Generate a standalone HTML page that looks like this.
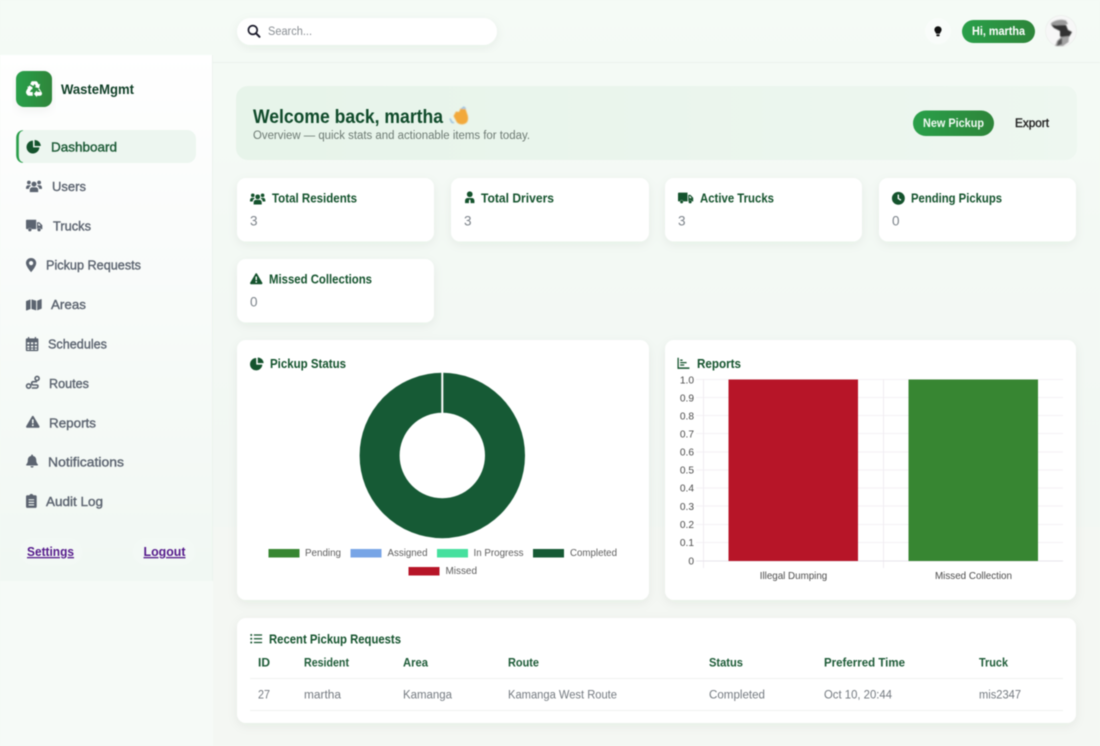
<!DOCTYPE html>
<html lang="en"><head><meta charset="utf-8"><title>WasteMgmt Dashboard</title>
<style>
html,body{margin:0;padding:0;width:1100px;height:746px;overflow:hidden;background:#f4f8f4}
svg{display:block;filter:blur(.4px)}
text{font-family:"Liberation Sans",sans-serif}
.m{stroke-width:.38px;stroke:currentColor}
.nav{font-size:13px;fill:#5c6470;color:#5c6470}
.card{font-size:12.5px;font-weight:bold;fill:#14532d}
.val{font-size:13.5px;fill:#7c838a}
.th{font-size:11.5px;font-weight:bold;fill:#1c5a36}
.td{font-size:11.5px;fill:#747a80}
.leg{font-size:10.2px;fill:#5e5e5e}
.tick{font-size:10.2px;fill:#4c4c4c}
</style></head><body>
<svg width="1100" height="746" viewBox="0 0 1100 746" xmlns="http://www.w3.org/2000/svg">
<defs>
<linearGradient id="bg" x1="0" y1="0" x2="0" y2="1"><stop offset="0" stop-color="#f5fbf6"/><stop offset=".7" stop-color="#f2f7f3"/><stop offset="1" stop-color="#f3f6f2"/></linearGradient>
<linearGradient id="side" x1="0" y1="0" x2="0" y2="1"><stop offset="0" stop-color="#ffffff"/><stop offset=".35" stop-color="#fafcfb"/><stop offset="1" stop-color="#f1f8f3"/></linearGradient>
<linearGradient id="btn" x1="0" y1="0" x2="1" y2="0"><stop offset="0" stop-color="#2aa04a"/><stop offset="1" stop-color="#2e853a"/></linearGradient>
<linearGradient id="ban" x1="0" y1="0" x2="1" y2="0"><stop offset="0" stop-color="#e7f4ea"/><stop offset="1" stop-color="#eef7f0"/></linearGradient>
<filter id="sh" x="-10%" y="-20%" width="120%" height="150%"><feDropShadow dx="0" dy="3" stdDeviation="5" flood-color="#203a28" flood-opacity=".06"/></filter>
<filter id="b1" x="-20%" y="-20%" width="140%" height="140%"><feGaussianBlur stdDeviation=".6"/></filter>

<g id="pie"><path d="M7 1.2A7 7 0 1 0 14 8.600H7.200Z"/><path d="M8.800.5A6.800 6.800 0 0 1 15.500 7H8.800Z"/></g>
<g id="users"><circle cx="8" cy="5.600" r="2.500"/><circle cx="2.900" cy="4" r="1.900"/><circle cx="13.100" cy="4" r="1.900"/><path d="M3.800 13.600V11.300C3.800 9.400 5.300 8.700 6.500 8.700H9.500C10.700 8.700 12.200 9.400 12.200 11.300V13.600Z"/><path d="M0 9.600C0 7.600 1 6.700 2.300 6.700H3.800C4.300 6.700 4.700 7 5 7.200 3.700 7.900 2.800 9 2.800 10.400H0ZM16 9.600C16 7.600 15 6.700 13.700 6.700H12.200C11.700 6.700 11.300 7 11 7.200 12.300 7.900 13.200 9 13.200 10.400H16Z"/></g>
<g id="truck"><path d="M.8 2.200H10V11.400H5.700A2.100 2.100 0 0 0 1.900 11.400H.8A.8.8 0 0 1 0 10.600V3A.8.8 0 0 1 .8 2.200Z"/><path d="M10.800 4.600H13.100L16 7.600V11.400H14.800A2.100 2.100 0 0 0 10.900 11.400H10.800ZM12 5.800V8H14.400L12.600 5.800Z" fill-rule="evenodd"/><circle cx="3.800" cy="12" r="1.600"/><circle cx="12.800" cy="12" r="1.600"/></g>
<g id="pin"><path fill-rule="evenodd" d="M8 .5C4.800.5 2.600 2.900 2.600 5.800 2.600 9 6.400 13.600 8 15.500 9.600 13.600 13.400 9 13.400 5.800 13.400 2.900 11.200.5 8 .5ZM8 3.700A2.200 2.200 0 1 1 8 8.100 2.200 2.200 0 0 1 8 3.700Z"/></g>
<g id="map"><path d="M0 4.200 4.600 2.400V12.200L.6 13.800C.3 13.900 0 13.700 0 13.400ZM5.600 2.400 10.400 3.800V13.600L5.600 12.200ZM11.400 3.800 15.400 2.200C15.700 2.100 16 2.300 16 2.600V11.800L11.400 13.600Z"/></g>
<g id="cal"><path fill-rule="evenodd" d="M3.600.5H5V2H10.800V.5H12.200V2H13.600A1 1 0 0 1 14.600 3V14.400A1 1 0 0 1 13.600 15.400H2.400A1 1 0 0 1 1.400 14.400V3A1 1 0 0 1 2.400 2H3.600ZM2.900 6.200V8.200H5.200V6.200ZM6.800 6.200V8.200H9.200V6.200ZM10.800 6.200V8.200H13.100V6.200ZM2.900 9.800V11.600H5.200V9.800ZM6.800 9.800V11.600H9.200V9.800ZM10.800 9.800V11.600H13.100V9.800ZM2.900 12.600V13.900H5.200V12.600ZM6.800 12.600V13.900H9.200V12.600ZM10.800 12.600V13.900H13.100V12.600Z"/></g>
<g id="route"><circle cx="3" cy="12" r="2.400" fill="none" stroke="currentColor" stroke-width="1.800"/><circle cx="12.600" cy="3.400" r="2.300" fill="none" stroke="currentColor" stroke-width="1.800"/><path d="M12.600 7H8.500C7 7 6.400 8 6.400 8.900S7 10.800 8.500 10.800H12C13.200 10.800 13.600 11.500 13.600 12.200S13 14.200 12 14.200H6.600" fill="none" stroke="currentColor" stroke-width="1.800"/></g>
<g id="warn"><path fill-rule="evenodd" d="M8 1C8.500 1 8.900 1.300 9.100 1.700L15.800 13.200C16.200 14 15.700 15 14.800 15H1.200C.3 15-.2 14 .2 13.200L6.900 1.700C7.100 1.300 7.500 1 8 1ZM7.100 5.200V9.800H8.900V5.200ZM8 10.900A1.100 1.100 0 1 0 8 13.100 1.100 1.100 0 0 0 8 10.900Z"/></g>
<g id="bell"><path d="M8 .5C8.600.5 9 1 9 1.600V2.100C11.200 2.500 12.800 4.400 12.800 6.700V7.700C12.800 9 13.300 10.300 14.100 11.300L14.600 11.800C15 12.300 14.700 13 14 13H2C1.300 13 1 12.300 1.400 11.800L1.900 11.300C2.700 10.300 3.200 9 3.200 7.700V6.700C3.200 4.400 4.800 2.500 7 2.100V1.600C7 1 7.400.5 8 .5Z"/><path d="M6.200 13.800H9.800C9.800 14.800 9 15.500 8 15.500S6.200 14.800 6.200 13.800Z"/></g>
<g id="clip"><path fill-rule="evenodd" d="M8 .4C9 .4 9.800 1 10.100 1.900H12.400C13.200 1.900 13.800 2.500 13.800 3.300V14.200C13.800 15 13.200 15.600 12.400 15.600H3.600C2.800 15.600 2.200 15 2.200 14.200V3.300C2.200 2.500 2.800 1.900 3.600 1.900H5.900C6.200 1 7 .4 8 .4ZM5 6.200V7.400H11V6.200ZM5 9V10.200H11V9ZM5 11.800V13H11V11.800Z"/></g>
<g id="recycle" fill="#fff">
<path d="M6.200 1.200H9.600C10.200 1.200 10.700 1.500 11 2L12.300 4.200 13.500 3.500 12.600 7.800 8.500 6.500 9.700 5.800 8.400 3.600 7.300 5.600 4.300 3.900 5 2.500C5.300 1.700 5.700 1.200 6.200 1.200Z"/>
<path d="M3.600 5 6.800 6.900 6.100 8.100 7 8.200 3 9.700 1.700 5.800 2.800 6.400 3.400 5.300ZM.9 9.700 2.400 7.100 5.300 8.900 4 11.100 6.700 11.100V14.600H3.300C2.200 14.600 1.500 13.900 1 13 .3 11.800.3 10.700.9 9.700Z"/>
<path d="M12.800 7.900 15.100 11.700C15.700 12.800 15 14.600 13.400 14.600H10.600V16L7.700 12.800 10.600 9.600V11H13.900L11.700 8.600Z"/>
</g>
<g id="tie"><circle cx="8" cy="4.200" r="3.700"/><path d="M2 15.500V12.600C2 10.400 3.600 9 5.400 9H10.600C12.400 9 14 10.400 14 12.600V15.500H9.100L9 12.200 8 10.600 7 12.200 6.900 15.500Z"/></g>
<g id="clock"><path fill-rule="evenodd" d="M8 1A7 7 0 1 1 8 15 7 7 0 0 1 8 1ZM7.200 4V8.400L10.400 10.600 11.200 9.400 8.700 7.700V4Z"/></g>
<g id="chart"><path d="M.6 1H2.200V13H15.500V14.800H.6Z"/><path d="M4 9.200H9V10.800H4ZM4 6.200H12V7.800H4ZM4 3.200H7V4.800H4Z"/></g>
<g id="list"><circle cx="1.600" cy="3.200" r="1.300"/><circle cx="1.600" cy="8" r="1.300"/><circle cx="1.600" cy="12.800" r="1.300"/><path d="M5 2.400H15.500V4H5ZM5 7.200H15.500V8.800H5ZM5 12H15.500V13.600H5Z"/></g>
</defs>

<!-- page -->
<rect width="1100" height="746" fill="url(#bg)"/>
<rect x="213" y="527" width="887" height="219" fill="#f4f7f3"/>
<rect y="581" width="213" height="165" fill="#f6faf7"/>
<rect x="213" y="62" width="887" height="1" fill="#ebf2ec"/>

<!-- sidebar -->
<rect x="0" y="55" width="212" height="526" fill="url(#side)"/>
<rect x="212" y="55" width="1" height="526" fill="#ecf3ee"/>
<rect x="16" y="71" width="36" height="36" rx="8" fill="url(#btn)" filter="url(#sh)"/>
<use href="#recycle" transform="translate(25.500 80) scale(1.08)"/>
<text x="61" y="94" font-size="13.500" font-weight="bold" fill="#103f27" textLength="73" lengthAdjust="spacingAndGlyphs">WasteMgmt</text>

<rect x="16" y="130" width="180" height="33" rx="9" fill="#edf6f0"/>
<path d="M23 130.500C19 130.500 16.500 134 16.500 138V155C16.500 159 19 162.500 23 162.500C20 162 18.500 159 18.500 155V138C18.500 134 20 131 23 130.500Z" fill="#2a9d4a" stroke="#2a9d4a" stroke-width=".6"/>
<use href="#pie" transform="translate(26.500 139.500) scale(.92)" fill="#14532d"/>
<text class="m" x="51" y="151.500" font-size="13" fill="#1c5a36" color="#1c5a36" textLength="66" lengthAdjust="spacingAndGlyphs">Dashboard</text>

<g fill="#5c6470" color="#5c6470">
<use href="#users" transform="translate(26 178.500) scale(1)"/>
<use href="#truck" transform="translate(26 217.500) scale(1.02)"/>
<use href="#pin" transform="translate(23.500 257.500) scale(.95)"/>
<use href="#map" transform="translate(26 297) scale(.98)"/>
<use href="#cal" transform="translate(24.500 336.500) scale(.95)"/>
<use href="#route" transform="translate(26 375.500) scale(.88)"/>
<use href="#warn" transform="translate(26 415) scale(.85)"/>
<use href="#bell" transform="translate(25 454) scale(.88)"/>
<use href="#clip" transform="translate(24 493.500) scale(.92)"/>
</g>
<g class="nav">
<text class="m nav" x="52" y="191" textLength="34" lengthAdjust="spacingAndGlyphs">Users</text>
<text class="m nav" x="53" y="230.500" textLength="38" lengthAdjust="spacingAndGlyphs">Trucks</text>
<text class="m nav" x="46" y="269.500" textLength="95" lengthAdjust="spacingAndGlyphs">Pickup Requests</text>
<text class="m nav" x="51" y="309" textLength="35" lengthAdjust="spacingAndGlyphs">Areas</text>
<text class="m nav" x="48" y="348.500" textLength="59" lengthAdjust="spacingAndGlyphs">Schedules</text>
<text class="m nav" x="49" y="388" textLength="40" lengthAdjust="spacingAndGlyphs">Routes</text>
<text class="m nav" x="49" y="427.500" textLength="47" lengthAdjust="spacingAndGlyphs">Reports</text>
<text class="m nav" x="48" y="466.500" textLength="76" lengthAdjust="spacingAndGlyphs">Notifications</text>
<text class="m nav" x="46" y="506" textLength="57" lengthAdjust="spacingAndGlyphs">Audit Log</text>
</g>
<rect x="20" y="538" width="62" height="27" rx="13" fill="#f3f9f5"/>
<rect x="133" y="538" width="62" height="27" rx="13" fill="#f3f9f5"/>
<text x="27" y="556" font-size="13" font-weight="bold" fill="#551a8b" text-decoration="underline" textLength="47" lengthAdjust="spacingAndGlyphs">Settings</text>
<text x="143.500" y="556" font-size="13" font-weight="bold" fill="#551a8b" text-decoration="underline" textLength="42" lengthAdjust="spacingAndGlyphs">Logout</text>

<!-- top bar -->
<rect x="237" y="18" width="260" height="27" rx="13.500" fill="#fff" filter="url(#sh)"/>
<circle cx="252.800" cy="30" r="4.400" fill="none" stroke="#1a1a2a" stroke-width="1.700"/>
<path d="M256 33.300 259.500 36.800" stroke="#1a1a2a" stroke-width="2" stroke-linecap="round"/>
<text x="268" y="35" font-size="11.500" fill="#8a8f94" textLength="44" lengthAdjust="spacingAndGlyphs">Search...</text>

<circle cx="938" cy="31" r="13" fill="#f9fcfa"/>
<path d="M938 26.200A3.600 3.600 0 0 1 941.600 29.800C941.600 31.400 940.200 32.400 939.900 33.800H936.100C935.800 32.400 934.400 31.400 934.400 29.800A3.600 3.600 0 0 1 938 26.200Z" fill="#111"/>
<rect x="936.300" y="34.400" width="3.400" height="1.800" rx=".8" fill="#111"/>

<rect x="962" y="20" width="73" height="23" rx="11.500" fill="url(#btn)"/>
<text x="972" y="35" font-size="11.500" font-weight="bold" fill="#fff" textLength="53" lengthAdjust="spacingAndGlyphs">Hi, martha</text>

<circle cx="1061" cy="31" r="15.500" fill="#f7f7f7" stroke="#eef1ee"/>
<g filter="url(#b1)">
<path d="M1050.500 24C1053 20.500 1060 18.500 1066 20.500L1068 24 1062 25.500 1055 25.500Z" fill="#9a9a9a"/>
<path d="M1051 24.500 1056 25.500 1066 25 1068 30 1072 32 1069 37 1063 39 1060 36 1060 31 1054 28Z" fill="#333"/>
<path d="M1061 37 1069 36 1068.500 42 1063 46 1055 46 1057 41Z" fill="#a2a2a2"/>
<path d="M1058 41 1062 38 1062 44 1057 46Z" fill="#555"/>
</g>

<!-- banner -->
<rect x="236" y="86" width="841" height="74" rx="12" fill="url(#ban)"/>
<text x="253" y="123" font-size="19" font-weight="bold" fill="#0f4a2a" textLength="190" lengthAdjust="spacingAndGlyphs">Welcome back, martha</text>
<g filter="url(#b1)">
<path d="M453.500 116 456 111.500 459 112 460.500 108.500 463 109 465.500 109 467 113.500C468.500 117 468.500 120.500 466.500 122.800 464 125 459.500 124.800 457 122.500Z" fill="#f2a93b"/>
<path d="M450 118.500 451.800 122.300 454 122.800M461.500 109 463.800 107.200 465.600 108.700" stroke="#8fb8dc" stroke-width="1.300" fill="none"/>
</g>
<text x="253" y="139" font-size="11.500" fill="#6d7a73" textLength="277" lengthAdjust="spacingAndGlyphs">Overview — quick stats and actionable items for today.</text>
<rect x="913" y="110.500" width="81" height="25.500" rx="12.750" fill="url(#btn)"/>
<text x="923" y="127" font-size="11.500" font-weight="bold" fill="#f2fbf4" textLength="61" lengthAdjust="spacingAndGlyphs">New Pickup</text>
<text x="1015" y="127" font-size="11.500" fill="#222" class="m" color="#222" textLength="34" lengthAdjust="spacingAndGlyphs">Export</text>

<!-- stat cards -->
<g fill="#fff" filter="url(#sh)">
<rect x="237" y="178" width="197" height="63.500" rx="9"/>
<rect x="451" y="178" width="198" height="63.500" rx="9"/>
<rect x="665" y="178" width="197" height="63.500" rx="9"/>
<rect x="879" y="178" width="197" height="63.500" rx="9"/>
<rect x="237" y="259" width="197" height="63.500" rx="9"/>
<rect x="237" y="340" width="412" height="260" rx="9"/>
<rect x="665" y="340" width="411" height="260" rx="9"/>
<rect x="237" y="618" width="839" height="105" rx="9"/>
</g>
<g fill="#14532d" color="#14532d">
<use href="#users" transform="translate(250 191.500) scale(.96)"/>
<use href="#tie" transform="translate(463.500 191) scale(.78)"/>
<use href="#truck" transform="translate(678 190.500) scale(.95)"/>
<use href="#clock" transform="translate(891 191) scale(.92)"/>
<use href="#warn" transform="translate(250 272.500) scale(.78)"/>
<use href="#pie" transform="translate(250 357) scale(.88)"/>
<use href="#chart" transform="translate(677 357) scale(.8)"/>
<use href="#list" transform="translate(250 632.500) scale(.78)"/>
</g>
<text class="card" x="272" y="202.500" textLength="85" lengthAdjust="spacingAndGlyphs">Total Residents</text>
<text class="card" x="481" y="202.500" textLength="73" lengthAdjust="spacingAndGlyphs">Total Drivers</text>
<text class="card" x="700" y="202.500" textLength="74" lengthAdjust="spacingAndGlyphs">Active Trucks</text>
<text class="card" x="911" y="202.500" textLength="91" lengthAdjust="spacingAndGlyphs">Pending Pickups</text>
<text class="card" x="269" y="283.500" textLength="103" lengthAdjust="spacingAndGlyphs">Missed Collections</text>
<text class="val" x="250" y="225.500">3</text>
<text class="val" x="464" y="225.500">3</text>
<text class="val" x="678" y="225.500">3</text>
<text class="val" x="892" y="225.500">0</text>
<text class="val" x="250" y="306.500">0</text>
<text class="card" x="270" y="368" textLength="76" lengthAdjust="spacingAndGlyphs">Pickup Status</text>
<text class="card" x="697" y="368" textLength="44" lengthAdjust="spacingAndGlyphs">Reports</text>

<!-- donut -->
<circle cx="442.300" cy="455.500" r="62.700" fill="none" stroke="#165a35" stroke-width="40"/>
<rect x="441.300" y="372" width="2" height="42" fill="#fff"/>
<g>
<rect x="268.500" y="549" width="31" height="8.500" fill="#378632"/><text class="leg" x="305" y="556" textLength="36" lengthAdjust="spacingAndGlyphs">Pending</text>
<rect x="350.500" y="549" width="31" height="8.500" fill="#78a5e6"/><text class="leg" x="387.500" y="556" textLength="40" lengthAdjust="spacingAndGlyphs">Assigned</text>
<rect x="437" y="549" width="31" height="8.500" fill="#46e09e"/><text class="leg" x="473.500" y="556" textLength="50" lengthAdjust="spacingAndGlyphs">In Progress</text>
<rect x="533" y="549" width="31" height="8.500" fill="#165a35"/><text class="leg" x="570" y="556" textLength="47" lengthAdjust="spacingAndGlyphs">Completed</text>
<rect x="408.500" y="567" width="31" height="8.500" fill="#b71528"/><text class="leg" x="445.500" y="574" textLength="31.500" lengthAdjust="spacingAndGlyphs">Missed</text>
</g>

<!-- bar chart -->
<g stroke="#f4f1f5" stroke-width="1" fill="none">
<path d="M696 379.500H1063M696 397.500H1063M696 415.500H1063M696 433.500H1063M696 452H1063M696 470H1063M696 488H1063M696 506H1063M696 524.500H1063M696 542.500H1063"/>
<path d="M703.500 379V568M883.500 379V568" stroke="#f0edf2"/>
<path d="M696 561H1063" stroke="#e8e5eb"/>
</g>
<rect x="728.500" y="379.500" width="129.500" height="181.500" fill="#b71528"/>
<rect x="908.500" y="379.500" width="129.500" height="181.500" fill="#378632"/>
<g class="tick" text-anchor="end">
<text x="694" y="383.500">1.0</text><text x="694" y="401.500">0.9</text><text x="694" y="419.500">0.8</text><text x="694" y="437.500">0.7</text><text x="694" y="455.500">0.6</text><text x="694" y="473.500">0.5</text><text x="694" y="491.500">0.4</text><text x="694" y="510">0.3</text><text x="694" y="528">0.2</text><text x="694" y="546">0.1</text><text x="694" y="564.500">0</text>
</g>
<g class="tick" text-anchor="middle">
<text x="793.500" y="579" textLength="67.500" lengthAdjust="spacingAndGlyphs">Illegal Dumping</text>
<text x="973.500" y="579" textLength="77" lengthAdjust="spacingAndGlyphs">Missed Collection</text>
</g>

<!-- table -->
<text class="card" x="269" y="643.500" textLength="132" lengthAdjust="spacingAndGlyphs">Recent Pickup Requests</text>
<text class="th" x="258" y="666.500" textLength="12" lengthAdjust="spacingAndGlyphs">ID</text>
<text class="th" x="304" y="666.500" textLength="45" lengthAdjust="spacingAndGlyphs">Resident</text>
<text class="th" x="403" y="666.500" textLength="25" lengthAdjust="spacingAndGlyphs">Area</text>
<text class="th" x="508" y="666.500" textLength="31" lengthAdjust="spacingAndGlyphs">Route</text>
<text class="th" x="709" y="666.500" textLength="34" lengthAdjust="spacingAndGlyphs">Status</text>
<text class="th" x="824" y="666.500" textLength="81" lengthAdjust="spacingAndGlyphs">Preferred Time</text>
<text class="th" x="979" y="666.500" textLength="29" lengthAdjust="spacingAndGlyphs">Truck</text>
<rect x="250" y="678" width="813" height="1" fill="#eff2f0"/>
<text class="td" x="258" y="698.500" textLength="12" lengthAdjust="spacingAndGlyphs">27</text>
<text class="td" x="304" y="698.500" textLength="37" lengthAdjust="spacingAndGlyphs">martha</text>
<text class="td" x="403" y="698.500" textLength="49" lengthAdjust="spacingAndGlyphs">Kamanga</text>
<text class="td" x="508" y="698.500" textLength="109" lengthAdjust="spacingAndGlyphs">Kamanga West Route</text>
<text class="td" x="709" y="698.500" textLength="56" lengthAdjust="spacingAndGlyphs">Completed</text>
<text class="td" x="824" y="698.500" textLength="68" lengthAdjust="spacingAndGlyphs">Oct 10, 20:44</text>
<text class="td" x="979" y="698.500" textLength="42" lengthAdjust="spacingAndGlyphs">mis2347</text>
<rect x="250" y="710" width="813" height="1" fill="#eff2f0"/>
</svg>
</body></html>
